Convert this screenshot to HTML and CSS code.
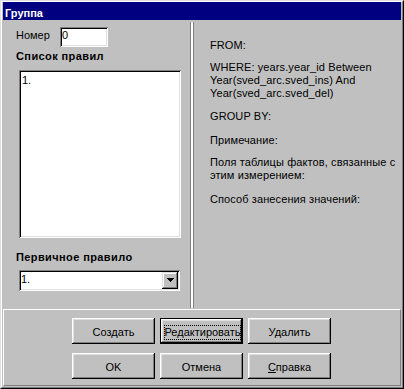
FILE: index.html
```html
<!DOCTYPE html>
<html lang="ru">
<head>
<meta charset="utf-8">
<title>Группа</title>
<link rel="stylesheet" href="styles.css">
</head>
<body>
<div class="window">
  <div class="frame">
    <div class="titlebar">Группа</div>
    <div class="main">
      <div class="left">
        <div class="num-row">
          <span class="num-label">Номер</span>
          <div class="field num-field">0</div>
        </div>
        <div class="group-label">Список правил</div>
        <div class="field listbox"><div class="list-item">1.</div></div>
        <div class="group-label primary-label">Первичное правило</div>
        <div class="field combo">
          <span class="combo-text">1.</span>
          <span class="combo-btn"><svg class="arrow" width="7" height="4" viewBox="0 0 7 4"><path d="M0 0h7v1H0zM1 1h5v1H1zM2 2h3v1H2zM3 3h1v1H3z" fill="#000"/></svg></span>
        </div>
      </div>
      <div class="divider"></div>
      <div class="right">
        <p class="info">FROM:</p>
        <p class="info g9">WHERE: years.year_id Between<br>Year(sved_arc.sved_ins) And<br>Year(sved_arc.sved_del)</p>
        <p class="info g10">GROUP BY:</p>
        <p class="info g11">Примечание:</p>
        <p class="info g9">Поля таблицы фактов, связанные с<br>этим измерением:</p>
        <p class="info g11">Способ занесения значений:</p>
      </div>
    </div>
    <div class="buttons">
      <div class="btn-grid">
        <div class="btn">Создать</div>
        <div class="btn btn-default"><span class="focus">Редактировать</span></div>
        <div class="btn">Удалить</div>
        <div class="btn">OK</div>
        <div class="btn">Отмена</div>
        <div class="btn"><span><span class="ul">С</span>правка</span></div>
      </div>
    </div>
  </div>
</div>
</body>
</html>
```
FILE: styles.css
```css
html, body {
  margin: 0;
  padding: 0;
}

body {
  width: 404px;
  height: 389px;
  overflow: hidden;
  background: #c0c0c0;
  font-family: "Liberation Sans", Arial, sans-serif;
  font-size: 11px;
  line-height: 13px;
  color: #000;
}

.window {
  box-sizing: border-box;
  width: 404px;
  height: 389px;
  border: 1px solid;
  border-color: #dfdfdf #000 #000 #dfdfdf;
  background: #c0c0c0;
}

.frame {
  box-sizing: border-box;
  height: 100%;
  border: 1px solid;
  border-color: #fff #808080 #808080 #fff;
  padding: 0 1px 1px 1px;
  display: flex;
  flex-direction: column;
}

.titlebar {
  box-sizing: border-box;
  height: 18px;
  padding: 5px 0 0 2px;
  background: #000080;
  color: #fff;
  font-weight: bold;
}

.main {
  display: flex;
  height: 289px;
}

.left {
  box-sizing: border-box;
  width: 187px;
  padding-left: 13px;
}

.num-row {
  display: flex;
  margin-top: 7px;
  height: 20px;
}

.num-label {
  width: 44px;
  margin-top: 2px;
}

.field {
  background: #fff;
  box-shadow: inset 1px 1px #808080, inset -1px -1px #fff, inset 2px 2px #000, inset -2px -2px #dfdfdf;
}

.num-field {
  box-sizing: border-box;
  width: 48px;
  height: 20px;
  padding: 2px 0 0 2px;
}

.group-label {
  font-weight: bold;
  letter-spacing: 0.4px;
  margin-top: 3px;
}

.listbox {
  box-sizing: border-box;
  width: 162px;
  height: 168px;
  margin: 7px 0 0 3px;
  padding: 4px 0 0 3px;
}

.primary-label {
  margin-top: 13px;
}

.combo {
  box-sizing: border-box;
  display: flex;
  width: 161px;
  height: 21px;
  margin: 6px 0 0 3px;
  padding: 2px;
}

.combo-text {
  flex: 1;
  line-height: 15px;
}

.combo-btn {
  box-sizing: border-box;
  display: flex;
  justify-content: center;
  align-items: flex-start;
  width: 16px;
  height: 17px;
  padding-top: 6px;
  background: #c0c0c0;
  box-shadow: inset -1px -1px #000, inset 1px 1px #dfdfdf, inset -2px -2px #808080, inset 2px 2px #fff;
}

.arrow {
  display: block;
}

.divider {
  box-sizing: border-box;
  width: 4px;
  margin: 2px 0 1px;
  border-left: 1px solid #808080;
  border-right: 1px solid #808080;
  background: #fff;
}

.right {
  flex: 1;
  padding: 19px 0 0 16px;
}

.info {
  margin: 0;
  white-space: nowrap;
  letter-spacing: 0.1px;
}

.g9 { margin-top: 9px; }
.g10 { margin-top: 10px; }
.g11 { margin-top: 11px; }

.buttons {
  box-sizing: border-box;
  height: 77px;
  border: 1px solid;
  border-color: #fff #808080 #808080 #fff;
  padding: 8px 0 0 68px;
}

.btn-grid {
  display: grid;
  grid-template-columns: repeat(3, 83px);
  grid-auto-rows: 26px;
  column-gap: 5px;
  row-gap: 9px;
}

.btn {
  box-sizing: border-box;
  display: flex;
  align-items: center;
  justify-content: center;
  padding-top: 2px;
  background: #c0c0c0;
  box-shadow: inset -1px -1px #000, inset 1px 1px #fff, inset -2px -2px #808080, inset 2px 2px #dfdfdf;
}

.btn-default {
  border: 1px solid #000;
}

.focus {
  box-sizing: border-box;
  display: inline-block;
  width: 77px;
  text-align: center;
  border: 1px dotted #000;
  margin-left: 1px;
}

.ul {
  text-decoration: underline;
}
```
